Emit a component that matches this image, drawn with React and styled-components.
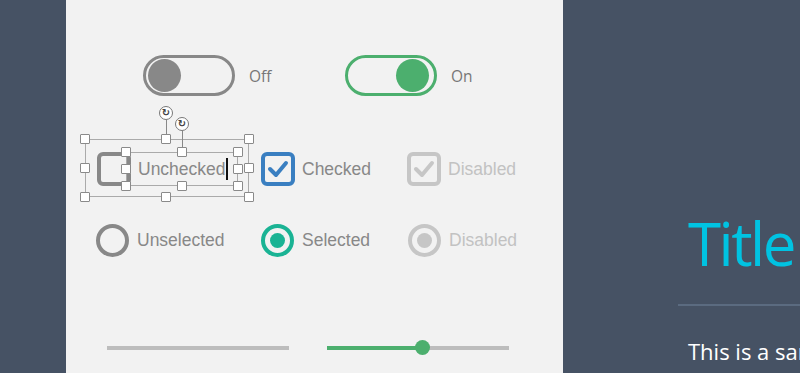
import React from "react";
import styled, { createGlobalStyle } from "styled-components";

const GlobalStyle = createGlobalStyle`
  html, body {
    margin: 0;
    padding: 0;
    background: #465264;
    overflow: hidden;
  }
`;

const GREY = "#888888";
const GREEN = "#4caf6e";
const BLUE = "#3a7fc1";
const TEAL = "#1ab394";
const MUTED = "#c6c6c6";

export default function App() {
  return (
    <>
      <GlobalStyle />
      <Page>
        <Panel>
          <ToggleRow>
            <ToggleItem>
              <Toggle $color={GREY} $on={false}>
                <Knob $color={GREY} />
              </Toggle>
              <SmallLabel>Off</SmallLabel>
            </ToggleItem>
            <ToggleItem>
              <Toggle $color={GREEN} $on>
                <Knob $color={GREEN} />
              </Toggle>
              <SmallLabel>On</SmallLabel>
            </ToggleItem>
          </ToggleRow>

          <CheckRow>
            <Option $w={164}>
              <Selected>
                <Box $color={GREY} />
                <Label $color="#888">Unchecked</Label>
                <Caret />
                <Frame $l={-12} $t={-13} $w={164} $h={58} />
                <Frame $l={29} $t={0} $w={112} $h={34} />
                <RotateHandle $x={69} $y={-39} $to={-13} />
                <RotateHandle $x={85} $y={-28} $to={0} />
                {[
                  [-12, -13], [69, -13], [152, -13],
                  [-12, 16], [152, 16],
                  [-12, 45], [69, 45], [152, 45],
                  [29, 0], [85, 0], [141, 0],
                  [29, 17], [141, 17],
                  [29, 34], [85, 34], [141, 34],
                ].map(([x, y], i) => (
                  <Handle key={i} style={{ left: x - 5, top: y - 5 }} />
                ))}
              </Selected>
            </Option>
            <Option $w={146}>
              <Box $color={BLUE}>
                <CheckMark color={BLUE} />
              </Box>
              <Label $color="#888">Checked</Label>
            </Option>
            <Option>
              <Box $color={MUTED}>
                <CheckMark color={MUTED} />
              </Box>
              <Label $color="#c2c2c2">Disabled</Label>
            </Option>
          </CheckRow>

          <RadioRow>
            <Option $w={165}>
              <Radio $color={GREY} />
              <Label $color="#888">Unselected</Label>
            </Option>
            <Option $w={147}>
              <Radio $color={TEAL}>
                <Dot $color={TEAL} />
              </Radio>
              <Label $color="#888">Selected</Label>
            </Option>
            <Option>
              <Radio $color={MUTED}>
                <Dot $color={MUTED} />
              </Radio>
              <Label $color="#c2c2c2">Disabled</Label>
            </Option>
          </RadioRow>

          <SliderRow>
            <Track>
              <Fill style={{ width: "0%" }} />
            </Track>
            <Track>
              <Fill style={{ width: "52%" }} />
              <Thumb style={{ left: "52%" }} />
            </Track>
          </SliderRow>
        </Panel>

        <Slide>
          <Title>Title</Title>
          <Rule />
          <Body>This is a sample text for the slide</Body>
        </Slide>
      </Page>
    </>
  );
}

const CheckMark = ({ color }) => (
  <svg width="26" height="26" viewBox="0 0 26 26">
    <polyline
      points="5,13 11,19 21,7"
      fill="none"
      stroke={color}
      strokeWidth="4"
      strokeLinecap="round"
      strokeLinejoin="round"
    />
  </svg>
);

const Page = styled.div`
  display: flex;
  width: 800px;
  height: 373px;
  background: #465264;
  overflow: hidden;
`;

const Panel = styled.div`
  margin-left: 66px;
  width: 497px;
  height: 373px;
  flex-shrink: 0;
  background: #f2f2f2;
  box-sizing: border-box;
  padding-top: 55px;
  display: flex;
  flex-direction: column;
`;

const ToggleRow = styled.div`
  display: flex;
  padding-left: 77px;
  height: 41px;
`;

const ToggleItem = styled.div`
  width: 202px;
  display: flex;
  align-items: center;
  gap: 14px;
`;

const Toggle = styled.div`
  box-sizing: border-box;
  width: 92px;
  height: 41px;
  border: 3px solid ${(p) => p.$color};
  border-radius: 21px;
  display: flex;
  align-items: center;
  justify-content: ${(p) => (p.$on ? "flex-end" : "flex-start")};
  padding-left: ${(p) => (p.$on ? "0" : "2px")};
  padding-right: ${(p) => (p.$on ? "5px" : "0")};
`;

const Knob = styled.div`
  width: 33px;
  height: 33px;
  border-radius: 50%;
  background: ${(p) => p.$color};
`;

const SmallLabel = styled.span`
  font-family: "Open Sans", "Noto Sans", sans-serif;
  font-size: 15.5px;
  color: #777;
`;

const CheckRow = styled.div`
  display: flex;
  padding-left: 31px;
  margin-top: 56px;
  height: 34px;
`;

const RadioRow = styled.div`
  display: flex;
  padding-left: 30px;
  margin-top: 38px;
  height: 32px;
`;

const Option = styled.div`
  width: ${(p) => (p.$w ? `${p.$w}px` : "auto")};
  display: flex;
  align-items: center;
`;

const Selected = styled.div`
  position: relative;
  display: flex;
  align-items: center;
  height: 34px;
`;

const Box = styled.div`
  box-sizing: border-box;
  width: 34px;
  height: 34px;
  border: 4px solid ${(p) => p.$color};
  border-radius: 6px;
  display: flex;
  align-items: center;
  justify-content: center;
  margin-right: 7px;
`;

const Radio = styled.div`
  box-sizing: border-box;
  width: 33px;
  height: 33px;
  border: 4px solid ${(p) => p.$color};
  border-radius: 50%;
  display: flex;
  align-items: center;
  justify-content: center;
  margin-right: 8px;
`;

const Dot = styled.div`
  width: 15px;
  height: 15px;
  border-radius: 50%;
  background: ${(p) => p.$color};
`;

const Label = styled.span`
  font-family: "Liberation Sans", Arial, sans-serif;
  font-size: 17.5px;
  color: ${(p) => p.$color};
`;

const Caret = styled.div`
  position: absolute;
  left: 129px;
  top: 6px;
  width: 1.5px;
  height: 22px;
  background: #111;
`;

const Frame = styled.div`
  position: absolute;
  left: ${(p) => p.$l}px;
  top: ${(p) => p.$t}px;
  width: ${(p) => p.$w}px;
  height: ${(p) => p.$h}px;
  box-sizing: border-box;
  border: 1px solid #aaa;
  pointer-events: none;
`;

const Handle = styled.div`
  position: absolute;
  width: 10px;
  height: 10px;
  box-sizing: border-box;
  background: #fff;
  border: 1px solid #8a8a8a;
  border-radius: 1px;
`;

const RotateHandle = styled.div`
  position: absolute;
  left: ${(p) => p.$x - 7}px;
  top: ${(p) => p.$y - 7}px;
  width: 14px;
  height: 14px;
  box-sizing: border-box;
  border: 1px solid #777;
  border-radius: 50%;
  background: #fff;
  &::before {
    content: "↻";
    position: absolute;
    left: 0;
    top: 0;
    width: 12px;
    line-height: 12px;
    text-align: center;
    font-family: "DejaVu Sans", sans-serif;
    font-size: 10px;
    font-weight: bold;
    color: #444;
  }
  &::after {
    content: "";
    position: absolute;
    left: 6px;
    top: 13px;
    width: 1px;
    height: ${(p) => p.$to - p.$y - 7}px;
    background: #888;
  }
`;

const SliderRow = styled.div`
  display: flex;
  gap: 38px;
  padding-left: 41px;
  margin-top: 84px;
  height: 15px;
  align-items: center;
`;

const Track = styled.div`
  position: relative;
  width: 182px;
  height: 4px;
  background: #bdbdbd;
`;

const Fill = styled.div`
  height: 100%;
  background: ${GREEN};
`;

const Thumb = styled.div`
  position: absolute;
  top: 50%;
  width: 15px;
  height: 15px;
  margin-left: -7px;
  margin-top: -7.5px;
  border-radius: 50%;
  background: ${GREEN};
`;

const Slide = styled.div`
  flex: 1;
  padding-left: 115px;
  padding-top: 203px;
  display: flex;
  flex-direction: column;
  white-space: nowrap;
`;

const Title = styled.div`
  margin-left: 10px;
  font-family: "Open Sans", "Noto Sans", sans-serif;
  font-size: 60px;
  letter-spacing: -2.5px;
  line-height: 80px;
  color: #00c3e2;
`;

const Rule = styled.div`
  margin-top: 21px;
  height: 2px;
  background: #5b6b80;
`;

const Body = styled.div`
  margin-left: 10px;
  margin-top: 30px;
  font-family: "Open Sans", "Noto Sans", sans-serif;
  font-size: 22px;
  color: #fff;
`;
